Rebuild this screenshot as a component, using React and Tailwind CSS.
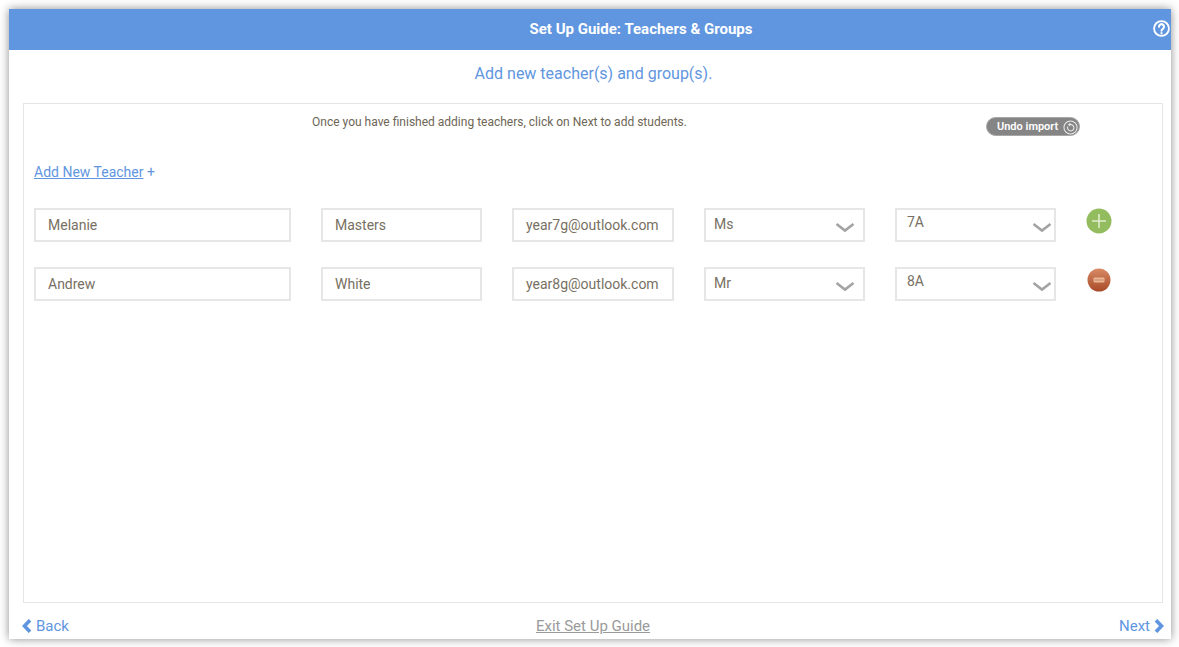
const font = { fontFamily: "Roboto, sans-serif" };

function Field({ w, mr, value }) {
  return (
    <div className={`h-[34px] border-2 border-[#e6e6e6] flex items-center pl-3 text-[14px] text-[#777062] shrink-0 ${w} ${mr}`}>
      {value}
    </div>
  );
}

function Chevron({ pos }) {
  return (
    <svg width="20" height="12" viewBox="0 0 20 12" className={`absolute top-[12px] ${pos}`}>
      <path d="M1.5 2 L10 8.5 L18.5 2" fill="none" stroke="#a3a3a3" strokeWidth="2.6" />
    </svg>
  );
}

function Select({ value, mr, narrow }) {
  return (
    <div className={`relative h-[34px] w-[161px] border-2 border-[#e6e6e6] text-[14px] leading-[20px] text-[#777062] shrink-0 ${mr}`}>
      <div className={narrow ? "absolute left-[10px] top-[2px]" : "absolute left-[8px] top-[4px]"}>{value}</div>
      <Chevron pos={narrow ? "right-[2px]" : "right-[8px]"} />
    </div>
  );
}

function Row({ first, last, email, title, group, action, mb }) {
  return (
    <div className={`flex items-start ${mb}`}>
      <Field w="w-[257px]" mr="mr-[30px]" value={first} />
      <Field w="w-[161px]" mr="mr-[30px]" value={last} />
      <Field w="w-[162px]" mr="mr-[30px]" value={email} />
      <Select value={title} mr="mr-[30px]" />
      <Select value={group} mr="mr-[30px]" narrow />
      {action}
    </div>
  );
}

function Plus() {
  return (
    <svg width="26" height="26" viewBox="0 0 26 26" className="block -ml-[0.5px]">
      <circle cx="13" cy="13" r="12.5" fill="#93bc5f" />
      <path d="M13 6 V20 M6 13 H20" stroke="#dfeccb" strokeWidth="1.6" />
    </svg>
  );
}

function Minus() {
  return (
    <svg width="24" height="24" viewBox="0 0 24 24" className="mt-[1px] ml-[1px] block">
      <defs>
        <linearGradient id="m" x1="0" y1="0" x2="0" y2="1">
          <stop offset="0" stopColor="#d98a66" />
          <stop offset="1" stopColor="#a84a28" />
        </linearGradient>
      </defs>
      <circle cx="12" cy="12" r="11.5" fill="url(#m)" />
      <rect x="6.5" y="9.5" width="11" height="5" rx="1" fill="#eab896" />
      <rect x="7.5" y="11.2" width="9" height="1.6" fill="#a84a28" opacity="0.3" />
    </svg>
  );
}

export default function App() {
  return (
    <div className="w-[1179px] h-[647px] bg-white overflow-hidden pt-[9px] px-[9px]" style={font}>
      <div className="w-[1162px] h-[630px] bg-white flex flex-col shadow-[0_0_9px_rgba(0,0,0,0.45)]">
        <div className="relative h-[41px] bg-[#5f96df] flex items-center justify-center text-white font-bold text-[15px] shrink-0 pl-[102px]">
          <span className="-mt-[1px]">Set Up Guide: Teachers &amp; Groups</span>
          <svg width="17" height="17" viewBox="0 0 24 24" className="absolute right-[1px] top-[11px]" fill="none" stroke="white" strokeWidth="2.6" strokeLinecap="round">
            <circle cx="12" cy="12" r="10.5" />
            <path d="M8.5 9.5a3.5 3.5 0 1 1 5.4 2.9c-1.2.8-1.9 1.4-1.9 2.8" strokeWidth="3" />
            <path d="M12 18.6v.2" strokeWidth="3" />
          </svg>
        </div>
        <div className="h-[53px] flex items-center justify-center text-[16px] text-[#5f96df] shrink-0 pb-[5px] pl-[7px]">
          Add new teacher(s) and group(s).
        </div>
        <div className="relative mx-[14px] h-[500px] w-[1140px] border border-[#e6e6e6] px-[10px] shrink-0">
          <div className="h-[58px] pt-[10px] text-center text-[12px] leading-[16px] text-[#6e6656] pr-[187px]">
            Once you have finished adding teachers, click on Next to add students.
          </div>
          <div className="absolute left-[962px] top-[13px] w-[94px] h-[19px] rounded-full bg-[#858585] border border-[#a8a8a8] flex items-center pl-[10px] pt-[1px] text-white text-[11px] font-semibold">
            <span className="mt-[1px]">Undo import</span>
            <svg width="15" height="15" viewBox="0 0 16 16" className="ml-[5px]" fill="none" stroke="#ececec">
              <circle cx="8" cy="8" r="7" strokeWidth="1.1" />
              <path d="M5.2 6.8a3.4 3.4 0 1 0 2.8-1.9H6.6M7.8 3.2 6.2 4.9l1.6 1.4" strokeWidth="1.1" />
            </svg>
          </div>
          <div className="h-[46px] text-[14px] leading-[20px] text-[#5f96df]">
            <span className="underline">Add New Teacher</span> +
          </div>
          <Row first="Melanie" last="Masters" email="year7g@outlook.com" title="Ms" group="7A" mb="mb-[25px]" action={<Plus />} />
          <Row first="Andrew" last="White" email="year8g@outlook.com" title="Mr" group="8A" action={<Minus />} />
        </div>
        <div className="relative flex-1 flex items-start justify-between px-[13px] pt-[14px] text-[15px] leading-[18px] text-[#5f96df]">
          <div className="flex items-center">
            <svg width="10" height="14" viewBox="0 0 10 14" className="mr-[4px]">
              <path d="M8 1.2 L2.5 7 L8 12.8" fill="none" stroke="#5f96df" strokeWidth="3.6" />
            </svg>
            Back
          </div>
          <div className="underline text-[#9a9a9a] absolute left-[6px] right-0 text-center">Exit Set Up Guide</div>
          <div className="flex items-center mr-[-6px]">
            Next
            <svg width="10" height="14" viewBox="0 0 10 14" className="ml-[4px]">
              <path d="M2 1.2 L7.5 7 L2 12.8" fill="none" stroke="#5f96df" strokeWidth="3.6" />
            </svg>
          </div>
        </div>
      </div>
    </div>
  );
}
